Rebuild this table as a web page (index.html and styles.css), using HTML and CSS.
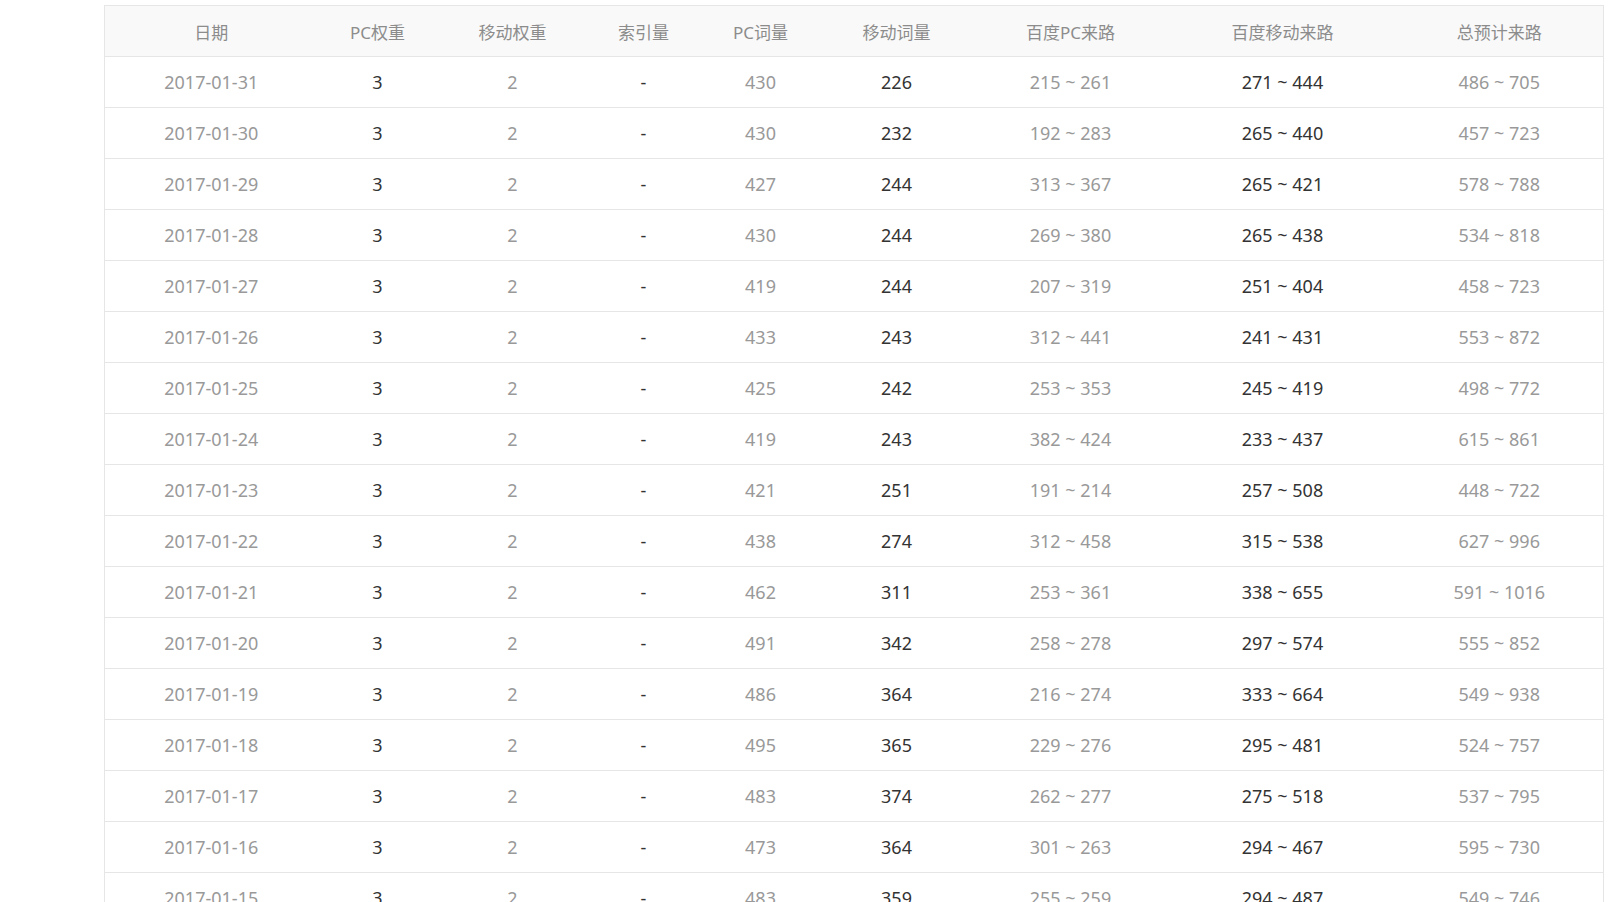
FILE: index.html
```html
<!DOCTYPE html>
<html lang="zh">
<head>
<meta charset="utf-8">
<title>数据</title>
<link rel="stylesheet" href="styles.css">
</head>
<body>
<div class="wrap">
<table class="data">
<colgroup>
<col class="c1"><col class="c2"><col class="c3"><col class="c4"><col class="c5"><col class="c6"><col class="c7"><col class="c8"><col class="c9">
</colgroup>
<thead>
<tr><th>日期</th><th>PC权重</th><th>移动权重</th><th>索引量</th><th>PC词量</th><th>移动词量</th><th>百度PC来路</th><th>百度移动来路</th><th>总预计来路</th></tr>
</thead>
<tbody>
<tr><td>2017-01-31</td><td>3</td><td>2</td><td>-</td><td>430</td><td>226</td><td>215 ~ 261</td><td>271 ~ 444</td><td>486 ~ 705</td></tr>
<tr><td>2017-01-30</td><td>3</td><td>2</td><td>-</td><td>430</td><td>232</td><td>192 ~ 283</td><td>265 ~ 440</td><td>457 ~ 723</td></tr>
<tr><td>2017-01-29</td><td>3</td><td>2</td><td>-</td><td>427</td><td>244</td><td>313 ~ 367</td><td>265 ~ 421</td><td>578 ~ 788</td></tr>
<tr><td>2017-01-28</td><td>3</td><td>2</td><td>-</td><td>430</td><td>244</td><td>269 ~ 380</td><td>265 ~ 438</td><td>534 ~ 818</td></tr>
<tr><td>2017-01-27</td><td>3</td><td>2</td><td>-</td><td>419</td><td>244</td><td>207 ~ 319</td><td>251 ~ 404</td><td>458 ~ 723</td></tr>
<tr><td>2017-01-26</td><td>3</td><td>2</td><td>-</td><td>433</td><td>243</td><td>312 ~ 441</td><td>241 ~ 431</td><td>553 ~ 872</td></tr>
<tr><td>2017-01-25</td><td>3</td><td>2</td><td>-</td><td>425</td><td>242</td><td>253 ~ 353</td><td>245 ~ 419</td><td>498 ~ 772</td></tr>
<tr><td>2017-01-24</td><td>3</td><td>2</td><td>-</td><td>419</td><td>243</td><td>382 ~ 424</td><td>233 ~ 437</td><td>615 ~ 861</td></tr>
<tr><td>2017-01-23</td><td>3</td><td>2</td><td>-</td><td>421</td><td>251</td><td>191 ~ 214</td><td>257 ~ 508</td><td>448 ~ 722</td></tr>
<tr><td>2017-01-22</td><td>3</td><td>2</td><td>-</td><td>438</td><td>274</td><td>312 ~ 458</td><td>315 ~ 538</td><td>627 ~ 996</td></tr>
<tr><td>2017-01-21</td><td>3</td><td>2</td><td>-</td><td>462</td><td>311</td><td>253 ~ 361</td><td>338 ~ 655</td><td>591 ~ 1016</td></tr>
<tr><td>2017-01-20</td><td>3</td><td>2</td><td>-</td><td>491</td><td>342</td><td>258 ~ 278</td><td>297 ~ 574</td><td>555 ~ 852</td></tr>
<tr><td>2017-01-19</td><td>3</td><td>2</td><td>-</td><td>486</td><td>364</td><td>216 ~ 274</td><td>333 ~ 664</td><td>549 ~ 938</td></tr>
<tr><td>2017-01-18</td><td>3</td><td>2</td><td>-</td><td>495</td><td>365</td><td>229 ~ 276</td><td>295 ~ 481</td><td>524 ~ 757</td></tr>
<tr><td>2017-01-17</td><td>3</td><td>2</td><td>-</td><td>483</td><td>374</td><td>262 ~ 277</td><td>275 ~ 518</td><td>537 ~ 795</td></tr>
<tr><td>2017-01-16</td><td>3</td><td>2</td><td>-</td><td>473</td><td>364</td><td>301 ~ 263</td><td>294 ~ 467</td><td>595 ~ 730</td></tr>
<tr><td>2017-01-15</td><td>3</td><td>2</td><td>-</td><td>483</td><td>359</td><td>255 ~ 259</td><td>294 ~ 487</td><td>549 ~ 746</td></tr>
</tbody>
</table>
</div>
</body>
</html>
```
FILE: styles.css
```css
html, body {
  margin: 0;
  padding: 0;
  background: #ffffff;
}
body {
  font-family: "Noto Sans", "Noto Sans CJK SC", sans-serif;
  height: 902px;
  overflow: hidden;
}
.wrap {
  padding: 5px 0 0 104px;
}
.data {
  border-collapse: collapse;
  table-layout: fixed;
  width: 1499px;
  border: 1px solid #e6e6e6;
}
.c1 { width: 213px; }
.c2 { width: 120px; }
.c3 { width: 150px; }
.c4 { width: 112px; }
.c5 { width: 122px; }
.c6 { width: 150px; }
.c7 { width: 198px; }
.c8 { width: 226px; }
.c9 { width: 208px; }
.data th {
  height: 50px;
  padding: 0;
  background: #f9f9f9;
  color: #8c8c8c;
  font-weight: normal;
  font-size: 17px;
  text-align: center;
  border-bottom: 1px solid #e6e6e6;
}
.data td {
  height: 50px;
  padding: 0;
  text-align: center;
  font-size: 18px;
  color: #999999;
  border-bottom: 1px solid #e6e6e6;
}
.data td:nth-child(even) {
  color: #333333;
}
```
